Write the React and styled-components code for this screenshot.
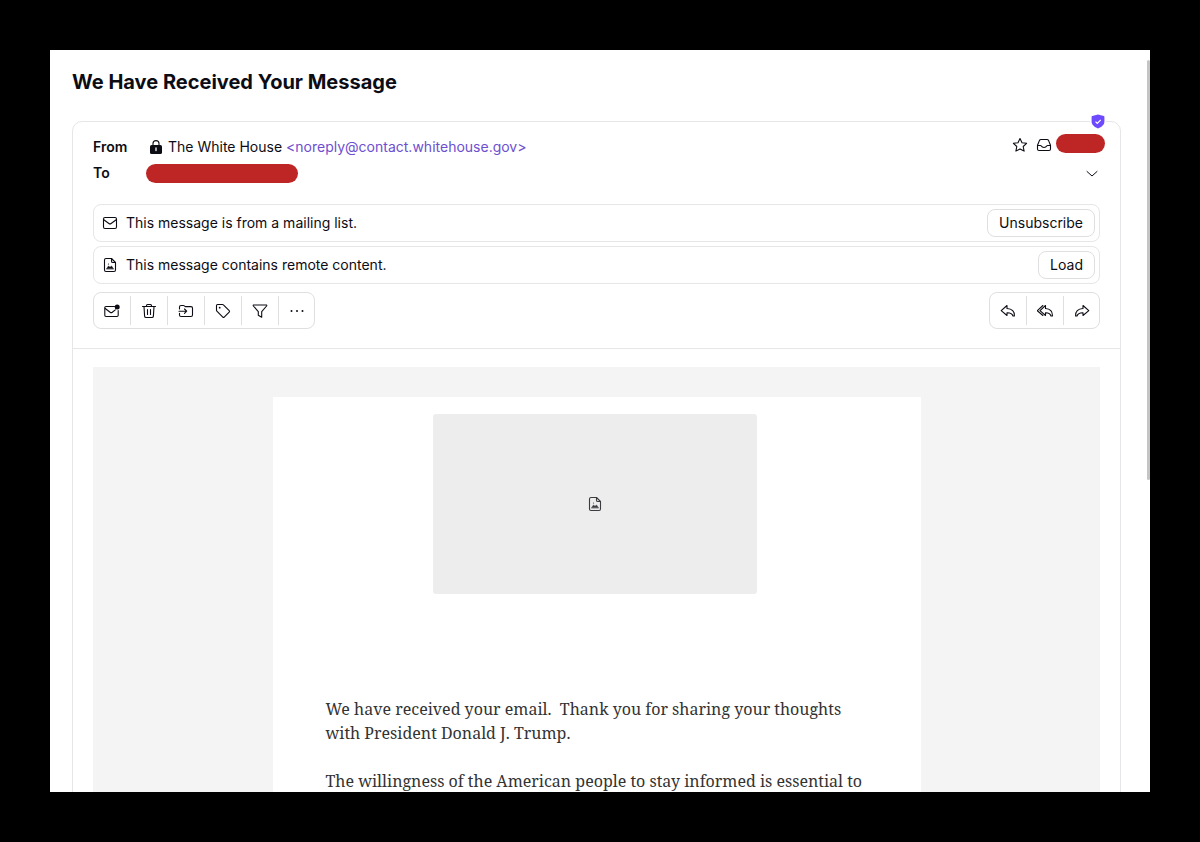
import React from "react";
import styled, {createGlobalStyle} from "styled-components";

const GlobalStyle = createGlobalStyle`
  * {
    box-sizing: border-box;
  }

  body {
    margin: 0;
    background: #000000;
    color: #0c0c14;
    font-family: Inter, "Liberation Sans", sans-serif;
    font-size: 14px;
    line-height: 20px;
  }

  button {
    font: inherit;
    color: inherit;
    cursor: pointer;
  }
`

const Screen = styled.div`
  height: 100vh;
  padding: 50px;
`

const Window = styled.main`
  position: relative;
  height: 100%;
  overflow: hidden;
  padding: 18px 29px 0 22px;
  background: #ffffff;
`

const ScrollThumb = styled.div`
  position: absolute;
  top: 10px;
  right: 0;
  width: 3px;
  height: 420px;
  border-radius: 2px;
  background: #c4c4c6;
`

const Subject = styled.h1`
  margin: 0 0 25px;
  font-size: 20px;
  font-weight: 700;
  line-height: 28px;
`

const Message = styled.article`
  position: relative;
  border: 1px solid #e6e6e8;
  border-radius: 10px;
`

const Shield = styled.span`
  position: absolute;
  top: -8px;
  right: 14px;
  display: flex;
  padding: 0 1px;
  background: #ffffff;
`

const MessageHeader = styled.header`
  padding: 12px 20px 19px;
  border-bottom: 1px solid #e6e6e8;
`

const HeaderRow = styled.div`
  display: flex;
  align-items: center;
  justify-content: space-between;
  height: 26px;
`

const Person = styled.div`
  display: flex;
  align-items: center;
`

const Label = styled.span`
  width: 53px;
  font-weight: 600;
`

const Sender = styled.span`
  display: flex;
  align-items: center;
  gap: 4px;
  padding-left: 2px;
`

const Address = styled.a`
  color: #6d4fd0;
  text-decoration: none;
`

const Redacted = styled.span`
  width: ${props => props.$wide ? '152px' : '49px'};
  height: 19px;
  border-radius: 10px;
  background: #be2625;
`

const Status = styled.div`
  display: flex;
  align-items: flex-end;
  align-self: flex-start;
  gap: 8px;
  margin-right: -5px;

  ${Redacted} {
    margin-left: -4px;
  }
`

const IconButton = styled.button`
  display: flex;
  padding: 0;
  border: 0;
  background: none;
`

const Banners = styled.div`
  display: flex;
  flex-direction: column;
  gap: 4px;
  margin: 18px 0 8px;
`

const Banner = styled.div`
  display: flex;
  align-items: center;
  gap: 8px;
  height: 38px;
  padding: 0 4px 0 8px;
  border: 1px solid #e6e6e8;
  border-radius: 8px;
`

const BannerText = styled.span`
  flex: 1;
`

const BannerButton = styled.button`
  height: 28px;
  padding: 0 11px;
  border: 1px solid #dfdfe2;
  border-radius: 8px;
  background: #ffffff;
`

const Toolbar = styled.div`
  display: flex;
  justify-content: space-between;
`

const ButtonGroup = styled.div`
  display: flex;
  align-items: center;
  height: 37px;
  border: 1px solid #dfdfe2;
  border-radius: 8px;
`

const ToolButton = styled.button`
  display: flex;
  align-items: center;
  justify-content: center;
  width: 37px;
  height: 29px;
  padding: 0;
  border: 0;
  background: none;

  & + & {
    border-left: 1px solid #dfdfe2;
  }

  &:first-child,
  &:last-child {
    width: 36px;
  }
`

const Body = styled.div`
  padding: 18px 20px;
`

const Mail = styled.div`
  padding: 30px 0;
  background: #f4f4f4;
`

const Sheet = styled.div`
  max-width: 648px;
  margin: 0 auto;
  padding: 17px 56px 40px 53px;
  background: #ffffff;
`

const Picture = styled.div`
  display: flex;
  align-items: center;
  justify-content: center;
  width: 60%;
  height: 180px;
  margin: 0 auto 103px;
  border-radius: 3px;
  background: #ededed;
  color: #3c3c40;
`

const Paragraph = styled.p`
  margin: 0 0 24px;
  color: #333333;
  font-family: "Noto Serif", "Liberation Serif", serif;
  font-size: 16px;
  line-height: 24px;
  white-space: pre-wrap;
`

const Svg = ({size = 16, children}) => (
  <svg
    width={size}
    height={size}
    viewBox="0 0 16 16"
    fill="none"
    stroke="currentColor"
    strokeWidth="1.1"
    strokeLinecap="round"
    strokeLinejoin="round"
    aria-hidden="true"
  >
    {children}
  </svg>
)

const LockIcon = () => <Svg>
  <path d="M5 6.5V4.6a3 3 0 0 1 6 0v1.9"/>
  <rect x="2" y="6" width="12" height="9" rx="1.6" fill="currentColor" stroke="none"/>
  <path d="M8 9v2.6" stroke="#ffffff" strokeWidth="1.3"/>
</Svg>

const ShieldIcon = () => <svg width="14" height="15" viewBox="0 0 14 15" aria-hidden="true">
  <path d="M7 .5 12.800 2.100q.6.2.6.8v4.600c0 3.200-2.600 5.400-6.400 7-3.800-1.600-6.400-3.800-6.400-7V2.900q0-.6.6-.8z" fill="#6d4aff"/>
  <path d="m4.500 7.600 1.800 1.700L9.700 5.800" fill="none" stroke="#ffffff" strokeWidth="1.2"/>
</svg>

const StarIcon = () => <Svg>
  <path d="m8 1.500 2 4.200 4.600.6-3.400 3.200.9 4.600L8 11.900l-4.100 2.200.9-4.600L1.400 6.300 6 5.700z"/>
</Svg>

const InboxIcon = () => <Svg>
  <path d="M1.500 8.200 3.400 3.600Q3.900 2.500 5 2.500h6q1.100 0 1.600 1.100l1.900 4.600v3.800q0 1.500-1.500 1.500H3q-1.500 0-1.500-1.500z"/>
  <path d="M1.500 8.500h2.800q.7 0 1 .6c.5 1 1.400 1.400 2.700 1.400s2.200-.4 2.700-1.400q.3-.6 1-.6h2.800"/>
</Svg>

const ChevronIcon = () => <Svg>
  <path d="m3 6.500 5 4.500 5-4.500" strokeWidth="1"/>
</Svg>

const EnvelopeIcon = () => <Svg>
  <rect x="1.500" y="2.500" width="13" height="11" rx="1.500"/>
  <path d="m1.800 4.800 5.100 3.700q1.100.8 2.200 0l5.100-3.700"/>
</Svg>

const ImageFileIcon = () => <Svg>
  <path d="M9.500 1.500H4Q2.500 1.500 2.500 3v10q0 1.500 1.500 1.500h8q1.500 0 1.500-1.500V5.500z"/>
  <path d="M9.500 1.500v2.700q0 1.300 1.300 1.300h2.700"/>
  <path d="m4.500 11.800 2-2.800 1.500 1.300 1.500-1.300 2 2.800z" fill="currentColor" strokeWidth=".5"/>
  <circle cx="6.500" cy="7" r=".6" fill="currentColor" stroke="none"/>
</Svg>

const UnreadIcon = () => <Svg>
  <path d="M10.500 3.500H2Q.8 3.500.8 4.700v7.600q0 1.200 1.200 1.200h11q1.200 0 1.200-1.200V7.500"/>
  <path d="m1.200 5.500 4.900 3.700q1.100.8 2.200 0l3-2.300"/>
  <circle cx="13.200" cy="4" r="2.500" fill="currentColor" stroke="none"/>
</Svg>

const TrashIcon = () => <Svg>
  <path d="M1.500 3.500h13M5.500 3.300V2.500q0-1 1-1h3q1 0 1 1v.8M3 3.500l.6 9.600q.1 1.400 1.500 1.400h5.800q1.400 0 1.500-1.400l.6-9.600M6.500 6.500v5M9.500 6.500v5"/>
</Svg>

const MoveIcon = () => <Svg>
  <path d="M1.500 6V4Q1.500 2.500 3 2.500h2.400q.6 0 1 .4l.8.7h5.800q1.500 0 1.500 1.500v6.900q0 1.500-1.500 1.500H3q-1.500 0-1.500-1.500v-1.700"/>
  <path d="M1 8.200h7.500M6.500 6l2.200 2.200-2.200 2.200"/>
</Svg>

const TagIcon = () => <Svg>
  <path d="M1.500 2.500v4.700q0 .6.4 1l5.900 5.900q.7.7 1.400 0l5-5q.7-.7 0-1.400L8.400 1.900q-.4-.4-1-.4h-4.900q-1 0-1 1z"/>
  <circle cx="4.700" cy="4.700" r=".9" fill="currentColor" stroke="none"/>
</Svg>

const FilterIcon = () => <Svg>
  <path d="M1.500 2h13q.5.500.1 1L9.700 8.600v5.600l-3.400-2V8.600L1.400 3q-.4-.5.1-1z"/>
</Svg>

const MoreIcon = () => <Svg>
  <g fill="currentColor" stroke="none">
    <circle cx="2.500" cy="8" r="1"/>
    <circle cx="8" cy="8" r="1"/>
    <circle cx="13.500" cy="8" r="1"/>
  </g>
</Svg>

const ReplyIcon = () => <Svg>
  <path d="M7 2.500 1.200 7.700 7 12.500V9.700c3.400-.1 5.200.8 6 3.300h1.400C14.800 8.500 12 5.700 7 5.500z"/>
</Svg>

const ReplyAllIcon = () => <Svg>
  <path d="M8.500 2.500 3 7.700l5.500 4.800V9.700c3.200-.1 4.800.8 5.500 3.300h1.400C15.700 8.500 13.200 5.700 8.500 5.500z"/>
  <path d="M5.900 2.500.3 7.700l5.600 4.800"/>
</Svg>

const ForwardIcon = () => <Svg>
  <path d="m9 2.500 5.800 5.200L9 12.500V9.700c-3.400-.1-5.200.8-6 3.300H1.600C1.200 8.500 4 5.700 9 5.500z"/>
</Svg>

const tools = [
  {name: 'Mark as unread', Icon: UnreadIcon},
  {name: 'Move to trash', Icon: TrashIcon},
  {name: 'Move to', Icon: MoveIcon},
  {name: 'Label as', Icon: TagIcon},
  {name: 'Filter on', Icon: FilterIcon},
  {name: 'More', Icon: MoreIcon},
]

const replies = [
  {name: 'Reply', Icon: ReplyIcon},
  {name: 'Reply all', Icon: ReplyAllIcon},
  {name: 'Forward', Icon: ForwardIcon},
]

const Tools = ({items}) => <ButtonGroup>
  {items.map(({name, Icon}) => (
    <ToolButton key={name} type="button" aria-label={name}><Icon/></ToolButton>
  ))}
</ButtonGroup>

const App = () => {
  return <Screen>
    <GlobalStyle/>
    <Window>
      <Subject>We Have Received Your Message</Subject>
      <Message>
        <Shield><ShieldIcon/></Shield>
        <MessageHeader>
          <HeaderRow>
            <Person>
              <Label>From</Label>
              <Sender>
                <LockIcon/>
                <span>The White House</span>
                <Address href="mailto:noreply@contact.whitehouse.gov">&lt;noreply@contact.whitehouse.gov&gt;</Address>
              </Sender>
            </Person>
            <Status>
              <IconButton type="button" aria-label="Star"><StarIcon/></IconButton>
              <InboxIcon/>
              <Redacted/>
            </Status>
          </HeaderRow>
          <HeaderRow>
            <Person>
              <Label>To</Label>
              <Redacted $wide/>
            </Person>
            <IconButton type="button" aria-label="Show details"><ChevronIcon/></IconButton>
          </HeaderRow>
          <Banners>
            <Banner>
              <EnvelopeIcon/>
              <BannerText>This message is from a mailing list.</BannerText>
              <BannerButton type="button">Unsubscribe</BannerButton>
            </Banner>
            <Banner>
              <ImageFileIcon/>
              <BannerText>This message contains remote content.</BannerText>
              <BannerButton type="button">Load</BannerButton>
            </Banner>
          </Banners>
          <Toolbar>
            <Tools items={tools}/>
            <Tools items={replies}/>
          </Toolbar>
        </MessageHeader>
        <Body>
          <Mail>
            <Sheet>
              <Picture><ImageFileIcon/></Picture>
              <Paragraph>{'We have received your email.  Thank you for sharing your thoughts with President Donald J. Trump.'}</Paragraph>
              <Paragraph>The willingness of the American people to stay informed is essential to</Paragraph>
            </Sheet>
          </Mail>
        </Body>
      </Message>
      <ScrollThumb/>
    </Window>
  </Screen>
}

export default App
